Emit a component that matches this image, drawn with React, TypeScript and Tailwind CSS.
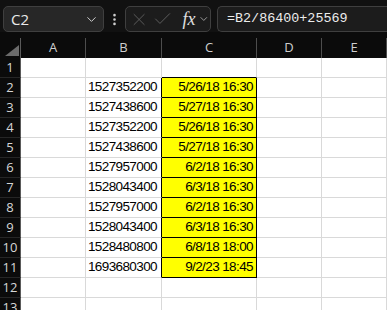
import { ChevronDown, EllipsisVertical, X, Check } from "lucide-react";

const cols = ["A", "B", "C", "D", "E"];

const data: Record<number, [string, string]> = {
  2: ["1527352200", "5/26/18 16:30"],
  3: ["1527438600", "5/27/18 16:30"],
  4: ["1527352200", "5/26/18 16:30"],
  5: ["1527438600", "5/27/18 16:30"],
  6: ["1527957000", "6/2/18 16:30"],
  7: ["1528043400", "6/3/18 16:30"],
  8: ["1527957000", "6/2/18 16:30"],
  9: ["1528043400", "6/3/18 16:30"],
  10: ["1528480800", "6/8/18 18:00"],
  11: ["1693680300", "9/2/23 18:45"],
};

const rows = Array.from({ length: 13 }, (_, i) => i + 1);

export default function App() {
  return (
    <div className="w-[387px] h-[310px] overflow-hidden bg-white font-['Liberation_Sans',sans-serif]">
      {/* Formula bar */}
      <div className="h-[32px] bg-[#111111] flex items-start pt-[6px] pl-[3px]">
        <div className="w-[101px] h-[26px] rounded-[5px] bg-[#272727] border border-[#3f3f3f] flex items-center justify-between pl-[7px] pr-[4px]">
          <span className="text-[15px] text-[#eaeaea] font-['Open_Sans',sans-serif]">C2</span>
          <ChevronDown size={15} className="text-[#cfcfcf]" strokeWidth={1.6} />
        </div>
        <div className="w-[21px] h-[26px] flex items-center justify-center">
          <EllipsisVertical size={15} className="text-[#d0d0d0]" strokeWidth={2.2} />
        </div>
        <div className="w-[86px] h-[26px] rounded-[5px] bg-[#1c1c1c] border border-[#3f3f3f] flex items-center pl-[3px] gap-[3px]">
          <X size={21} className="text-[#5f5f5f]" strokeWidth={1.1} />
          <Check size={22} className="text-[#5f5f5f]" strokeWidth={1.1} />
          <span className="ml-[6px] text-[18px] leading-none italic text-[#e0e0e0] font-['Liberation_Serif',serif]">fx</span>
          <ChevronDown size={12} className="text-[#bdbdbd]" strokeWidth={1.6} />
        </div>
        <div className="ml-[6px] flex-1 h-[26px] rounded-l-[5px] bg-[#1c1c1c] border border-r-0 border-[#3f3f3f] flex items-center pl-[9px]">
          <span className="text-[13.4px] text-[#ececec] font-['Liberation_Mono',monospace]">=B2/86400+25569</span>
        </div>
      </div>

      {/* Gap above headers */}
      <div className="h-[6px] bg-[#0b0b0b]" />

      {/* Sheet grid */}
      <div className="grid grid-cols-[21px_65px_76px_95px_65px_65px_1fr] auto-rows-[20px] text-[13.5px]">
        {/* Corner */}
        <div className="bg-[#0b0b0b] border-r border-[#5a5a5a] relative">
          <svg width="21" height="20" className="absolute inset-0">
            <polygon points="5,18 19,18 19,7" fill="#6b6b6b" />
          </svg>
        </div>
        {cols.map((c) => (
          <div
            key={c}
            className="bg-[#0b0b0b] border-r border-[#4d4d4d] flex items-center justify-center text-[#cfcfcf] text-[13px] font-['Open_Sans',sans-serif]"
          >
            {c}
          </div>
        ))}
        <div className="bg-[#0b0b0b]" />

        {rows.map((r) => {
          const d = data[r];
          return [
            <div
              key={`h${r}`}
              className="bg-[#0b0b0b] border-r border-[#5a5a5a] border-b border-b-[#262626] flex items-center justify-center text-[#d6d6d6] text-[13px] font-['Open_Sans',sans-serif]"
            >
              {r}
            </div>,
            <div key={`a${r}`} className="border-r border-b border-[#d9d9d9]" />,
            <div
              key={`b${r}`}
              className={`border-b border-[#d9d9d9] border-r flex items-center justify-end pr-[4px] text-black tracking-[-0.6px] ${
                d ? "border-r-black" : ""
              }`}
            >
              {d?.[0]}
            </div>,
            <div
              key={`c${r}`}
              className={`border-r border-b flex items-center justify-end pr-[3px] text-black tracking-[-0.6px] ${
                d ? "bg-[#ffff00] border-black" : r === 1 ? "border-r-[#d9d9d9] border-b-black" : "border-[#d9d9d9]"
              }`}
            >
              {d?.[1]}
            </div>,
            <div key={`d${r}`} className="border-r border-b border-[#d9d9d9]" />,
            <div key={`e${r}`} className="border-r border-b border-[#d9d9d9]" />,
            <div key={`f${r}`} className="border-b border-[#d9d9d9]" />,
          ];
        })}
      </div>
    </div>
  );
}
